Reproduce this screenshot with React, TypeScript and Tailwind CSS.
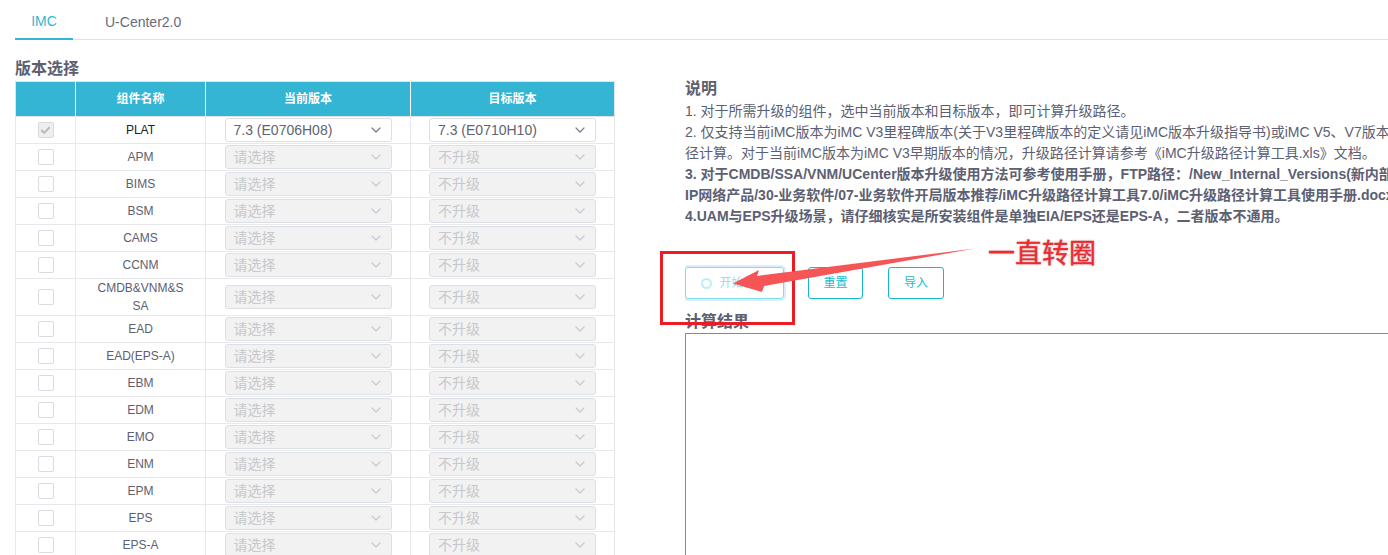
import { ChevronDown, Check } from "lucide-react";

const rows = ["APM", "BIMS", "BSM", "CAMS", "CCNM", "CMDB&VNM&SSA", "EAD", "EAD(EPS-A)", "EBM", "EDM", "EMO", "ENM", "EPM", "EPS", "EPS-A"];

function Select({ label, disabled }: { label: string; disabled?: boolean }) {
  return (
    <div className={`mx-auto flex h-6 w-[167px] items-center justify-between rounded-[3px] border border-[#dcdfe6] pl-2 pr-[7px] text-sm ${disabled ? "bg-[#f2f2f2] text-[#c6c8cc]" : "bg-white text-[#5f6373]"}`}>
      <span>{label}</span>
      <ChevronDown size={16} strokeWidth={1.8} className={disabled ? "text-[#c8cad0]" : "text-[#7a7e8c]"} />
    </div>
  );
}

function Checkbox({ checked }: { checked?: boolean }) {
  return (
    <div className={`mx-auto flex h-4 w-4 items-center justify-center rounded-[2px] border border-[#d9dbe0] ${checked ? "bg-[#eeeeee]" : "bg-white"}`}>
      {checked && <Check size={11} strokeWidth={4} className="text-[#b5b7bc]" />}
    </div>
  );
}

function Row({ name, current, target, on }: { name: string; current: string; target: string; on?: boolean }) {
  return (
    <tr>
      <td className="h-[27px] border border-[#e6e8ec] p-0"><Checkbox checked={on} /></td>
      <td className={`border border-[#e6e8ec] px-5 py-0 text-center text-xs leading-[18px] break-all ${on ? "text-[#222222]" : "text-[#5c6072]"}`}>{name}</td>
      <td className="border border-[#e6e8ec] p-0"><Select label={current} disabled={!on} /></td>
      <td className="border border-[#e6e8ec] p-0"><Select label={target} disabled={!on} /></td>
    </tr>
  );
}

export default function App() {
  return (
    <div className="relative h-[555px] w-[1388px] overflow-hidden bg-white font-['Liberation_Sans','Noto_Sans_CJK_SC',sans-serif] text-[#5c6072]">
      {/* tabs */}
      <div className="ml-[15px] flex h-10 border-b border-[#e0e2e6] text-sm">
        <div className="flex h-10 w-[58px] items-center justify-center border-b-2 border-[#35b6d5] pt-[3px] text-[#35b6d5]">IMC</div>
        <div className="ml-8 flex h-10 items-center pt-[3px] text-[#666b7a]">U-Center2.0</div>
      </div>

      <div className="flex">
        {/* left */}
        <div className="ml-[15px] w-[600px] shrink-0">
          <h2 className="mt-[19px] h-[22px] text-base leading-[20px] font-bold text-[#5c6072]">版本选择</h2>
          <table className="w-[600px] table-fixed border-collapse">
            <colgroup>
              <col className="w-[60px]" />
              <col className="w-[130px]" />
              <col className="w-[205px]" />
              <col className="w-[204px]" />
            </colgroup>
            <thead>
              <tr className="h-[35px] bg-[#34b5d4] text-xs font-bold text-white">
                <th className="border-y border-l border-[#dfe2e6] border-r-white"></th>
                <th className="border-y border-x border-y-[#dfe2e6] border-x-white">组件名称</th>
                <th className="border-y border-x border-y-[#dfe2e6] border-x-white">当前版本</th>
                <th className="border-y border-r border-[#dfe2e6] border-l-white">目标版本</th>
              </tr>
            </thead>
            <tbody>
              <Row name="PLAT" current="7.3 (E0706H08)" target="7.3 (E0710H10)" on />
              {rows.map((r) => (
                <Row key={r} name={r} current="请选择" target="不升级" />
              ))}
            </tbody>
          </table>
        </div>

        {/* right */}
        <div className="ml-[70px] w-[703px] shrink-0 overflow-hidden">
          <h2 className="mt-[39px] text-base leading-[20px] font-bold text-[#5c6072]">说明</h2>
          <div className="mt-[2px] text-sm leading-[21px] whitespace-nowrap">
            <p>1. 对于所需升级的组件，选中当前版本和目标版本，即可计算升级路径。</p>
            <p>2. 仅支持当前iMC版本为iMC V3里程碑版本(关于V3里程碑版本的定义请见iMC版本升级指导书)或iMC V5、V7版本的升级路</p>
            <p>径计算。对于当前iMC版本为iMC V3早期版本的情况，升级路径计算请参考《iMC升级路径计算工具.xls》文档。</p>
            <p className="font-bold">3. 对于CMDB/SSA/VNM/UCenter版本升级使用方法可参考使用手册，FTP路径：/New_Internal_Versions(新内部</p>
            <p className="font-bold">IP网络产品/30-业务软件/07-业务软件开局版本推荐/iMC升级路径计算工具7.0/iMC升级路径计算工具使用手册.docx</p>
            <p className="font-bold">4.UAM与EPS升级场景，请仔细核实是所安装组件是单独EIA/EPS还是EPS-A，二者版本不通用。</p>
          </div>

          <div className="mt-[40px] flex items-center text-xs">
            <button className="flex h-8 w-[99px] items-center justify-center gap-[7px] rounded-[3px] border border-[#7fdcea] text-[#8fe0ec] shadow-[0_0_0_2px_#dbeefa]">
              <span className="h-[11px] w-[11px] rounded-full border-2 border-[#bdeef5]"></span>
              <span>开始计算</span>
            </button>
            <button className="ml-6 h-8 w-[55px] rounded-[3px] border border-[#16b8cb] text-[#22bccf]">重置</button>
            <button className="ml-[25px] h-8 w-14 rounded-[3px] border border-[#16b8cb] text-[#22bccf]">导入</button>
          </div>

          <h2 className="mt-[13px] text-base leading-[20px] font-bold text-[#5c6072]">计算结果</h2>
          <div className="mt-[1px] h-[300px] w-[720px] border border-[#35a9c6] bg-white"></div>
        </div>
      </div>

      {/* screenshot annotation */}
      <div className="absolute top-[251px] left-[660px] h-[74px] w-[135px] border-[3px] border-[#ed1c24]"></div>
      <svg className="absolute top-0 left-0" width="1388" height="555" viewBox="0 0 1388 555" fill="none">
        <polygon points="975,248.5 764,286 762,292 733,283.5 759,270 757,276" fill="#f65555" />
      </svg>
      <span className="absolute top-[236px] left-[988px] text-[27px] leading-[36px] whitespace-nowrap text-[#ee2a2f] [-webkit-text-stroke:0.3px_#ee2a2f] [text-shadow:0_0_3px_#c4c4c4,0_0_2px_#d8d8d8]">一直转圈</span>
    </div>
  );
}
